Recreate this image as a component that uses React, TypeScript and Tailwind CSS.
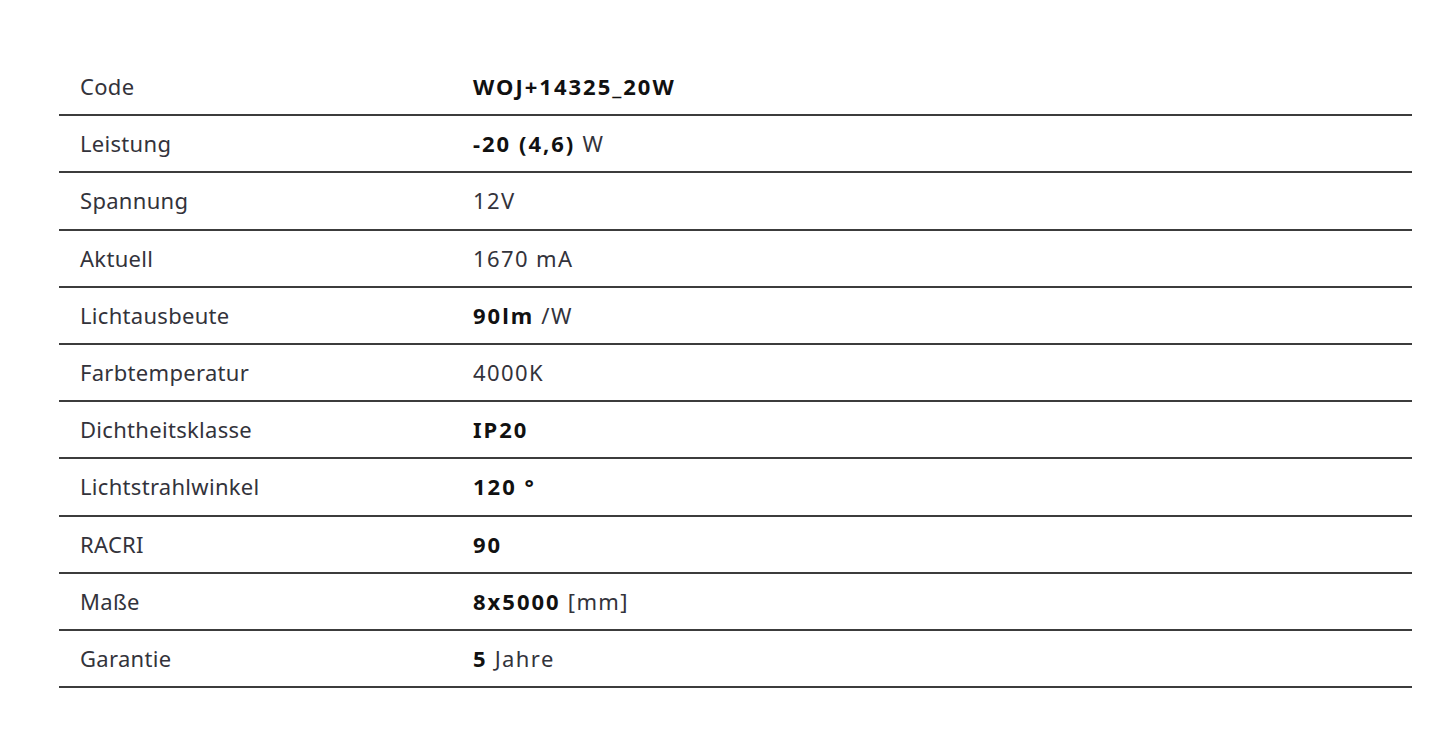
const rows: { label: string; bold: string; rest?: string }[] = [
  { label: 'Code', bold: 'WOJ+14325_20W' },
  { label: 'Leistung', bold: '-20 (4,6)', rest: ' W' },
  { label: 'Spannung', bold: '', rest: '12V' },
  { label: 'Aktuell', bold: '', rest: '1670 mA' },
  { label: 'Lichtausbeute', bold: '90lm', rest: ' /W' },
  { label: 'Farbtemperatur', bold: '', rest: '4000K' },
  { label: 'Dichtheitsklasse', bold: 'IP20' },
  { label: 'Lichtstrahlwinkel', bold: '120 °' },
  { label: 'RACRI', bold: '90' },
  { label: 'Maße', bold: '8x5000', rest: ' [mm]' },
  { label: 'Garantie', bold: '5', rest: ' Jahre' },
]

export default function App() {
  return (
    <div className="min-h-screen w-full bg-white pt-[59px] pl-[59px] pr-[33px] font-['Noto_Sans',sans-serif] text-[22px]">
      <div className="flex flex-col">
        {rows.map((r) => (
          <div key={r.label} className="flex h-[57.2px] items-center border-b-2 border-[#3c3c3c]">
            <div className="w-[414px] pl-[21px] tracking-[0.3px] text-[#33333b]">{r.label}</div>
            <div className="whitespace-pre tracking-[1.4px] text-[#33333b]">
              {r.bold && <span className="font-bold tracking-[2px] text-[#111111]">{r.bold}</span>}
              {r.rest}
            </div>
          </div>
        ))}
      </div>
    </div>
  )
}
